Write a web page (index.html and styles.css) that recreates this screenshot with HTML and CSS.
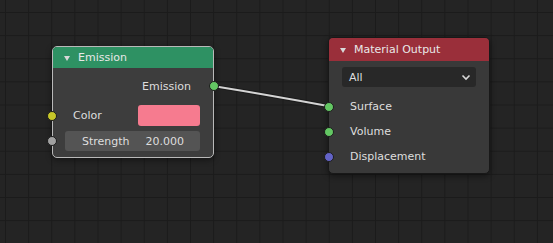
FILE: index.html
```html
<!DOCTYPE html>
<html lang="en">
<head>
    <meta charset="UTF-8">
    <title>Node Editor</title>
    <link rel="stylesheet" href="styles.css">
</head>
<body>
    <div class="canvas">
        <!-- link between Emission and Surface -->
        <svg class="links" width="553" height="243" viewBox="0 0 553 243">
            <path d="M213 86 C 250 92, 290 99, 328 106" stroke="#1a1a1a" stroke-width="4" fill="none"/>
            <path d="M213 86 C 250 92, 290 99, 328 106" stroke="#d4d4d4" stroke-width="2" fill="none"/>
        </svg>

        <!-- Emission node -->
        <div class="node node-emission selected">
            <div class="node-header">
                <span class="arrow"></span>
                <span class="title">Emission</span>
            </div>
            <div class="node-body">
                <div class="row row-output">
                    <span class="label">Emission</span>
                    <span class="socket socket-out green"></span>
                </div>
                <div class="row row-color">
                    <span class="socket socket-in yellow"></span>
                    <span class="label">Color</span>
                    <span class="swatch"></span>
                </div>
                <div class="row row-field">
                    <span class="socket socket-in gray"></span>
                    <div class="field">
                        <span>Strength</span>
                        <span>20.000</span>
                    </div>
                </div>
            </div>
        </div>

        <!-- Material Output node -->
        <div class="node node-output">
            <div class="node-header">
                <span class="arrow"></span>
                <span class="title">Material Output</span>
            </div>
            <div class="node-body">
                <div class="dropdown">
                    <span>All</span>
                    <svg width="10" height="7" viewBox="0 0 10 7">
                        <path d="M1.5 1.5 L5 5 L8.5 1.5" stroke="#d8d8d8" stroke-width="1.6" fill="none"/>
                    </svg>
                </div>
                <div class="row row-input">
                    <span class="socket socket-in green"></span>
                    <span class="label">Surface</span>
                </div>
                <div class="row row-input">
                    <span class="socket socket-in green"></span>
                    <span class="label">Volume</span>
                </div>
                <div class="row row-input">
                    <span class="socket socket-in purple"></span>
                    <span class="label">Displacement</span>
                </div>
            </div>
        </div>
    </div>
</body>
</html>
```

FILE: styles.css
```css
body{
    margin: 0;
    background: #232323;
    font-family: "DejaVu Sans", sans-serif;
    font-size: 11px;
    color: #dedede;
}
.canvas{
    position: relative;
    width: 553px;
    height: 243px;
    overflow: hidden;
    background-color: #242424;
    background-image:
        linear-gradient(to right, #1b1b1b 1px, transparent 1px),
        linear-gradient(to bottom, #1b1b1b 1px, transparent 1px);
    background-size: 23.13px 23.13px;
    background-position: 5px 12px;
}
.links{
    position: absolute;
    left: 0;
    top: 0;
}

/* nodes */
.node{
    position: absolute;
    box-sizing: border-box;
    background: #3d3d3d;
    border: 1px solid #181818;
    border-radius: 5px;
    box-shadow: 0 2px 6px rgba(0,0,0,.45);
}
.node.selected{
    border-color: #b9b9b9;
}
.node-header{
    display: flex;
    align-items: center;
    gap: 8px;
    padding-left: 11px;
    border-radius: 4px 4px 0 0;
    color: #e8e8e8;
    font-size: 11px;
}
.arrow{
    width: 0;
    height: 0;
    border-left: 3px solid transparent;
    border-right: 3px solid transparent;
    border-top: 5px solid #d8d8d8;
    margin-top: 1px;
}

.node-emission{
    left: 52px;
    top: 46px;
    width: 162px;
    height: 112px;
}
.node-emission .node-header{
    height: 21px;
    background: #2e9163;
}
.node-emission .node-body{
    padding: 8px 13px 7px 12px;
}

.node-output{
    left: 328px;
    top: 37px;
    width: 162px;
    height: 137px;
    background: #393939;
}
.node-output .node-header{
    height: 23px;
    background: #9a2f3a;
}
.node-output .node-body{
    padding: 6px 13px 5px 13px;
}

/* rows */
.row{
    position: relative;
    display: flex;
    align-items: center;
}
.row-output{
    height: 20px;
    margin-bottom: 9px;
    justify-content: flex-end;
    padding-right: 9px;
}
.row-color{
    height: 21px;
    margin-bottom: 5px;
    padding-left: 8px;
}
.row-color .label{
    flex: 1;
}
.row-field{
    height: 20px;
}
.row-input{
    height: 25px;
    padding-left: 8px;
}

.swatch{
    width: 62px;
    height: 21px;
    border-radius: 3px;
    background: #f67b8f;
}
.field{
    flex: 1;
    height: 20px;
    display: flex;
    align-items: center;
    justify-content: space-between;
    padding: 0 16px 0 17px;
    background: #545454;
    border-radius: 3px;
}
.dropdown{
    height: 20px;
    display: flex;
    align-items: center;
    justify-content: space-between;
    padding: 0 5px 0 7px;
    margin-bottom: 7px;
    background: #282828;
    border-radius: 3px;
}

/* sockets */
.socket{
    position: absolute;
    top: 50%;
    width: 8px;
    height: 8px;
    margin-top: -5px;
    border: 1px solid #1c1c1c;
    border-radius: 50%;
}
.node-emission .socket-in{
    left: -18px;
}
.node-emission .socket-out{
    right: -19px;
}
.node-output .socket-in{
    left: -18px;
}
.green{ background: #63c763; }
.yellow{ background: #c7c729; }
.gray{ background: #a1a1a1; }
.purple{ background: #6363c7; }
```
